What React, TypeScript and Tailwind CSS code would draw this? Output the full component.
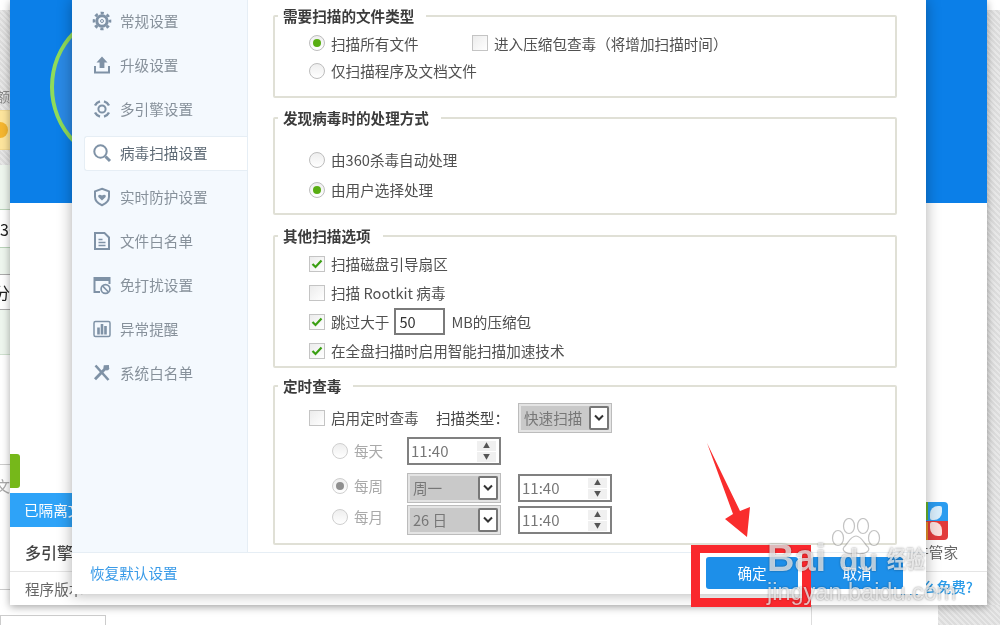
import React from "react";

const hatch = "bg-[repeating-linear-gradient(45deg,#dcdcdc_0px,#dcdcdc_2px,#e8e8e8_2px,#e8e8e8_4px)]";

const Ic = ({ children }: { children: React.ReactNode }) => (
  <svg width="20" height="20" viewBox="0 0 20 20" fill="none" stroke="#7f92a6" strokeWidth="2" className="shrink-0">
    {children}
  </svg>
);

const navItems: { label: string; icon: React.ReactNode; active?: boolean }[] = [
  {
    label: "常规设置",
    icon: (
      <Ic>
        <circle cx="10" cy="10" r="5.2" strokeWidth="3" />
        <circle cx="10" cy="10" r="8" strokeWidth="2.6" strokeDasharray="3.2 3.08" strokeDashoffset="1.6" />
        <circle cx="10" cy="10" r="1.5" strokeWidth="1" />
      </Ic>
    ),
  },
  {
    label: "升级设置",
    icon: (
      <Ic>
        <path d="M10 1.5l5.5 6H12.4v5.5H7.6V7.5H4.5z" fill="#7f92a6" stroke="none" />
        <path d="M3 11v6.5h14V11" />
      </Ic>
    ),
  },
  {
    label: "多引擎设置",
    icon: (
      <Ic>
        <circle cx="10" cy="10" r="3.6" />
        <path d="M3 6.5A8 8 0 0 1 8 2.4M12 2.4a8 8 0 0 1 5 4.1M3 13.5a8 8 0 0 0 5 4.1M12 17.6a8 8 0 0 0 5-4.1" strokeWidth="2.4" />
      </Ic>
    ),
  },
  {
    label: "病毒扫描设置",
    active: true,
    icon: (
      <Ic>
        <circle cx="8.5" cy="8.5" r="6.2" />
        <path d="M13.5 13.5l4.5 4.5" strokeWidth="3" />
      </Ic>
    ),
  },
  {
    label: "实时防护设置",
    icon: (
      <Ic>
        <path d="M10 1.8l7 2.6v5.4c0 4-3 6.8-7 8.4-4-1.6-7-4.4-7-8.4V4.4z" />
        <path d="M10 13.5L6.6 10.2c-1.5-1.7.9-3.7 3.4-1.6 2.5-2.1 4.9-.1 3.4 1.6z" fill="#7f92a6" stroke="none" />
      </Ic>
    ),
  },
  {
    label: "文件白名单",
    icon: (
      <Ic>
        <path d="M3 2h9.5L17 6.5V18H3z" />
        <path d="M6.5 8.5h4M6.5 11.5h7M6.5 14.5h7" strokeWidth="1.6" />
      </Ic>
    ),
  },
  {
    label: "免打扰设置",
    icon: (
      <Ic>
        <path d="M8 17H2.5V3h15v6" />
        <path d="M2.5 4.5h15" strokeWidth="3" />
        <circle cx="13.5" cy="14" r="4.4" strokeWidth="1.7" />
        <path d="M10.6 11l5.8 6" strokeWidth="1.7" />
      </Ic>
    ),
  },
  {
    label: "异常提醒",
    icon: (
      <Ic>
        <rect x="2" y="2.5" width="16" height="15" rx="1.5" strokeWidth="1.5" />
        <path d="M6.5 8.5v7M10 5v10.5M13.5 7v8.5" strokeWidth="2.6" />
      </Ic>
    ),
  },
  {
    label: "系统白名单",
    icon: (
      <Ic>
        <path d="M3.5 2.5l13 14.5" strokeWidth="2.6" />
        <path d="M17 3.5l-4 .2-.4 2.6-9.6 10" strokeWidth="2.8" />
        <circle cx="14.8" cy="5.2" r="2.4" fill="#7f92a6" stroke="none" />
      </Ic>
    ),
  },
];

const Radio = ({ on, off }: { on?: boolean; off?: boolean }) => (
  <span
    className={`flex h-4 w-4 shrink-0 items-center justify-center rounded-full border bg-gradient-to-b from-[#eeeeee] to-white ${
      off ? "border-[#cfcfcf]" : "border-[#bdbdbd]"
    }`}
  >
    {on && <span className={`h-2 w-2 rounded-full ${off ? "bg-[#8f8f8f]" : "bg-[#58ad12]"}`} />}
  </span>
);

const Check = ({ on }: { on?: boolean }) => (
  <span className="flex h-4 w-4 shrink-0 items-center justify-center border border-[#c4c4c4] bg-gradient-to-br from-[#ececec] to-white">
    {on && (
      <svg width="12" height="10" viewBox="0 0 12 10" fill="none">
        <path d="M1.5 5l3 3 6-6.5" stroke="#3a9f12" strokeWidth="2.2" />
      </svg>
    )}
  </span>
);

const Group = ({ title, h, className, children }: { title: string; h: string; className: string; children: React.ReactNode }) => (
  <div className={`relative shrink-0 rounded-[2px] border-2 border-[#e0e0d6] ${h} ${className}`}>
    <span className="absolute left-[3px] top-[-11px] bg-white px-[5px] pr-[12px] text-[14.6px] leading-[20px] font-bold text-[#3c3c3c]">
      {title}
    </span>
    {children}
  </div>
);

const Chevron = () => (
  <svg width="10" height="8" viewBox="0 0 10 8" fill="none">
    <path d="M1 1.5l4 4 4-4" stroke="#333" strokeWidth="2" />
  </svg>
);

const Select = ({ value, className }: { value: string; className: string }) => (
  <div className={`flex h-full items-center border border-[#bcbcbc] bg-[#e4e4e4] p-[2px] ${className}`}>
    <div className="flex h-full flex-1 items-center justify-between bg-[#c9c9c9] pl-[3px] text-[14.6px] text-[#777]">
      <span>{value}</span>
      <span className="flex h-full w-5 items-center justify-center rounded-[2px] border-2 border-[#777] bg-white">
        <Chevron />
      </span>
    </div>
  </div>
);

const Time = ({ className }: { className?: string }) => (
  <div className={`flex h-[28px] w-[94px] items-center justify-between border-2 border-[#808080] bg-white pl-[2px] pr-[3px] text-[15px] text-[#777] ${className ?? ""}`}>
    <span>11:40</span>
    <span className="flex w-[19px] flex-col gap-[1px]">
      <span className="flex h-[10px] items-center justify-center bg-[#f0f0f0] text-[7px] leading-none text-[#555]">▲</span>
      <span className="flex h-[10px] items-center justify-center bg-[#f0f0f0] text-[7px] leading-none text-[#555]">▼</span>
    </span>
  </div>
);

const Paw = () => (
  <svg width="52" height="38" viewBox="0 0 52 38" fill="rgba(255,255,255,.55)" stroke="rgba(120,120,120,.45)" strokeWidth="1.2">
    <ellipse cx="8" cy="20" rx="5.5" ry="7.5" />
    <ellipse cx="19" cy="8" rx="5.5" ry="7.5" />
    <ellipse cx="33" cy="8" rx="5.5" ry="7.5" />
    <ellipse cx="44" cy="20" rx="5.5" ry="7.5" />
    <path d="M26 18c-6 0-8 8-12 11-3 4 3 8 12 6 9 2 15-2 12-6-4-3-6-11-12-11z" />
  </svg>
);

export default function App() {
  return (
    <div
      className="relative h-[625px] w-[1000px] overflow-hidden bg-white text-[#505050] blur-[0.5px]"
      style={{ fontFamily: '"Noto Sans CJK SC", "Noto Sans", sans-serif' }}
    >
      {/* page behind the windows: left strip */}
      <div className="absolute left-0 top-0 flex h-[625px] w-[10px] flex-col overflow-hidden">
        <div className="h-[10px] shrink-0 bg-white" />
        <div className={`flex h-[100px] shrink-0 items-end justify-end pb-[3px] text-[14px] text-[#888] ${hatch}`}>
          <span>额</span>
        </div>
        <div className="flex h-[40px] shrink-0 items-center border-y border-[#f2d88f] bg-[#fde59d]">
          <span className="ml-[-8px] h-4 w-4 shrink-0 rounded-full bg-[#f5b62f]" />
        </div>
        <div className={`h-[15px] shrink-0 ${hatch}`} />
        <div className="h-[45px] shrink-0 border-b border-[#b9d3b9] bg-[#eef6ee]" />
        <div className="flex h-[38px] shrink-0 items-center border-b border-[#b9d3b9] bg-white text-[16px] text-[#222]">
          <span>36</span>
        </div>
        <div className="h-[27px] shrink-0 border-b border-[#aaa] bg-[#eef6ee]" />
        <div className="flex h-[35px] shrink-0 items-center justify-end overflow-hidden border-b border-[#aaa] bg-white text-[16px] text-[#222]">
          <span>分</span>
        </div>
        <div className="h-[45px] shrink-0 border-b border-[#cfe0cf] bg-[#eef6ee]" />
        <div className="h-[110px] shrink-0 border-b border-[#ccc] bg-white" />
        <div className="flex h-[125px] shrink-0 items-start justify-end overflow-hidden border-b border-[#ccc] bg-white pt-[10px] text-[15px] text-[#aaa]">
          <span>文</span>
        </div>
      </div>

      {/* page behind the windows: right strip and bottom strip */}
      <div className={`absolute bottom-0 right-0 top-[10px] w-[13px] ${hatch}`} />
      <div className={`absolute bottom-0 left-[938px] right-0 top-[605px] ${hatch}`} />
      <div className="absolute left-0 top-[615px] h-[12px] w-[106px] border border-[#ccc] bg-white" />
      <div className="absolute left-[811px] top-[605px] h-[20px] w-px bg-[#ddd]" />

      {/* main application window */}
      <div className="absolute left-[10px] top-0 flex h-[605px] w-[977px] flex-col bg-white shadow-[0_2px_8px_rgba(0,0,0,0.35)]">
        <div className="relative h-[203px] shrink-0 overflow-hidden bg-[#0b7fe8]">
          <div className="absolute left-[40px] top-[7px] h-[160px] w-[160px] rounded-full border-[4px] border-[#8fdc5a] bg-[#2a8ae6]" />
        </div>
        <div className="flex flex-1 flex-col justify-end">
          <div className="mb-[5px] h-[34px] w-[10px] rounded-r-[3px] bg-[#76b81a]" />
          <div className="flex h-[34px] w-[800px] items-center bg-[#2ea3f8] pl-[14px] text-[14.6px] text-white">已隔离文件</div>
          <div className="flex h-[45px] items-center border-b border-[#e5e5e5] pl-[15px] pt-[5px] text-[16px] font-medium text-[#444]">多引擎保护</div>
          <div className="relative flex h-[33px] items-center pl-[15px] text-[14.6px] text-[#666]">
            <span>程序版本</span>
            <span className="absolute right-[14px] top-[4px] text-[14.6px] font-medium text-[#2a9be8]">为什么免费?</span>
          </div>
        </div>
        <div className="absolute left-[908px] top-[502px] flex h-[38px] w-[30px] flex-col overflow-hidden rounded-[4px]">
          <div className="flex h-[19px] items-end justify-between bg-[#2a9cf0] pb-[1px] pr-[6px]">
            <span className="h-full w-[10px] bg-[#6cb62c]" />
            <span className="h-[14px] w-[12px] rounded-[8px_2px_8px_2px] bg-[#d9eefc]" />
          </div>
          <div className="flex h-[19px] items-start justify-between bg-[#e23b3b] pt-[1px] pr-[6px]">
            <span className="h-full w-[10px] bg-[#e8932a]" />
            <span className="h-[14px] w-[12px] rounded-[2px_8px_2px_8px] bg-[#fbe0dc]" />
          </div>
        </div>
        <span className="absolute right-[29px] top-[541px] text-[14.6px] text-[#666]">软件管家</span>
      </div>

      {/* settings dialog */}
      <div className="absolute left-[72px] top-0 flex h-[594px] w-[854px] flex-col bg-white shadow-[0_0_14px_rgba(0,0,0,0.32)]">
        <div className="flex h-[552px] shrink-0">
          <div className="w-[176px] shrink-0 border-r border-[#e6eef5] bg-[#f4f9fe]">
            <div className="mt-[-1px] flex flex-col">
              {navItems.map((it) => (
                <div key={it.label} className="flex h-[44px] items-center">
                  <div
                    className={`ml-[12px] flex h-[35px] w-[165px] items-center gap-[8px] rounded-l-[3px] text-[14.6px] ${
                      it.active ? "relative border border-r-0 border-[#e6eef5] bg-white pl-[7px] text-[#5f6b76]" : "pl-[8px] text-[#87919b]"
                    }`}
                  >
                    {it.icon}
                    <span>{it.label}</span>
                  </div>
                </div>
              ))}
            </div>
          </div>

          <div className="flex-1 pl-[25px] pr-[29px] pt-[15px]">
            <Group title="需要扫描的文件类型" h="h-[83px]" className="pl-[34px] pt-[13px]">
              <div className="flex h-[27px] items-center text-[14.6px]">
                <div className="flex w-[163px] items-center gap-[6px]">
                  <Radio on />
                  <span>扫描所有文件</span>
                </div>
                <div className="flex items-center gap-[6px]">
                  <Check />
                  <span>进入压缩包查毒（将增加扫描时间）</span>
                </div>
              </div>
              <div className="flex h-[27px] items-center gap-[6px] text-[14.6px]">
                <Radio />
                <span>仅扫描程序及文档文件</span>
              </div>
            </Group>

            <Group title="发现病毒时的处理方式" h="h-[98px]" className="mt-[19px] pl-[34px] pt-[26px]">
              <div className="flex h-[30px] items-center gap-[6px] text-[14.6px]">
                <Radio />
                <span>由360杀毒自动处理</span>
              </div>
              <div className="flex h-[30px] items-center gap-[6px] text-[14.6px]">
                <Radio on />
                <span>由用户选择处理</span>
              </div>
            </Group>

            <Group title="其他扫描选项" h="h-[133px]" className="mt-[20px] pl-[34px] pt-[12px]">
              <div className="flex h-[29px] items-center gap-[6px] text-[14.6px]">
                <Check on />
                <span>扫描磁盘引导扇区</span>
              </div>
              <div className="flex h-[29px] items-center gap-[6px] text-[14.6px]">
                <Check />
                <span>扫描 Rootkit 病毒</span>
              </div>
              <div className="flex h-[29px] items-center gap-[6px] text-[14.6px]">
                <Check on />
                <span>跳过大于</span>
                <span className="ml-[-1px] flex h-[27px] w-[51px] items-center border-2 border-[#7a7a7a] bg-white pl-[3px] text-[#333]">50</span>
                <span>MB的压缩包</span>
              </div>
              <div className="flex h-[29px] items-center gap-[6px] text-[14.6px]">
                <Check on />
                <span>在全盘扫描时启用智能扫描加速技术</span>
              </div>
            </Group>

            <Group title="定时查毒" h="h-[160px]" className="mt-[17px] pt-[16px] text-[14.6px]">
              <div className="flex h-[30px] items-center pl-[34px]">
                <Check />
                <span className="ml-[6px] w-[105px]">启用定时查毒</span>
                <span className="w-[82px] text-[#444]">扫描类型：</span>
                <Select value="快速扫描" className="w-[94px]" />
              </div>
              <div className="mt-[4px] flex h-[28px] items-center pl-[57px] text-[#aaa]">
                <div className="flex w-[75px] items-center gap-[6px]">
                  <Radio off />
                  <span>每天</span>
                </div>
                <Time />
              </div>
              <div className="mt-[8px] flex h-[30px] items-center pl-[57px] text-[#aaa]">
                <div className="mb-[4px] flex w-[75px] items-center gap-[6px]">
                  <Radio on off />
                  <span>每周</span>
                </div>
                <Select value="周一" className="w-[94px]" />
                <Time className="ml-[17px]" />
              </div>
              <div className="mt-[2px] flex h-[30px] items-center pl-[57px] text-[#aaa]">
                <div className="mb-[6px] flex w-[75px] items-center gap-[6px]">
                  <Radio off />
                  <span>每月</span>
                </div>
                <Select value="26 日" className="w-[94px]" />
                <Time className="ml-[17px]" />
              </div>
            </Group>
          </div>
        </div>

        <div className="flex h-[42px] items-center justify-between border-t border-[#e6eef5] pb-[1px] pl-[18px] pr-[23px]">
          <span className="text-[14.6px] text-[#3a9be8]">恢复默认设置</span>
          <div className="flex gap-[13px]">
            <button className="h-[32px] w-[92px] rounded-[3px] bg-[#1d8fe9] text-[14.6px] text-white">确定</button>
            <button className="h-[32px] w-[92px] rounded-[3px] bg-[#1d8fe9] text-[14.6px] text-white">取消</button>
          </div>
        </div>
      </div>

      {/* red annotation */}
      <div className="absolute left-[691px] top-[545px] h-[62px] w-[120px] border-x-[9px] border-b-[9px] border-t-[8px] border-[#f9282d]" />
      <svg className="absolute left-[700px] top-[440px]" width="56" height="100" viewBox="0 0 56 100">
        <polygon points="7,3 40,71 50,67 47,97 25,79 33,74" fill="#f92d2d" />
      </svg>

      {/* watermark */}
      <div className="pointer-events-none absolute left-[767px] top-[518px] h-[90px] w-[185px] text-white/70 [text-shadow:0_0_2px_rgba(0,0,0,0.45)]">
        <span className="absolute left-0 top-[18px] text-[38px] font-bold leading-[44px]" style={{ fontFamily: '"Liberation Sans", sans-serif' }}>
          Bai
        </span>
        <span className="absolute left-[63px] top-0">
          <Paw />
        </span>
        <span className="absolute left-[72px] top-[22px] text-[32px] font-bold leading-[40px]" style={{ fontFamily: '"Liberation Sans", sans-serif' }}>
          du
        </span>
        <span className="absolute left-[120px] top-[20px] scale-y-125 text-[19px] font-bold leading-[40px]">经验</span>
        <span className="absolute left-0 top-[61px] text-[23.5px] leading-[26px]" style={{ fontFamily: '"Liberation Sans", sans-serif' }}>
          jingyan.baidu.com
        </span>
      </div>
    </div>
  );
}
